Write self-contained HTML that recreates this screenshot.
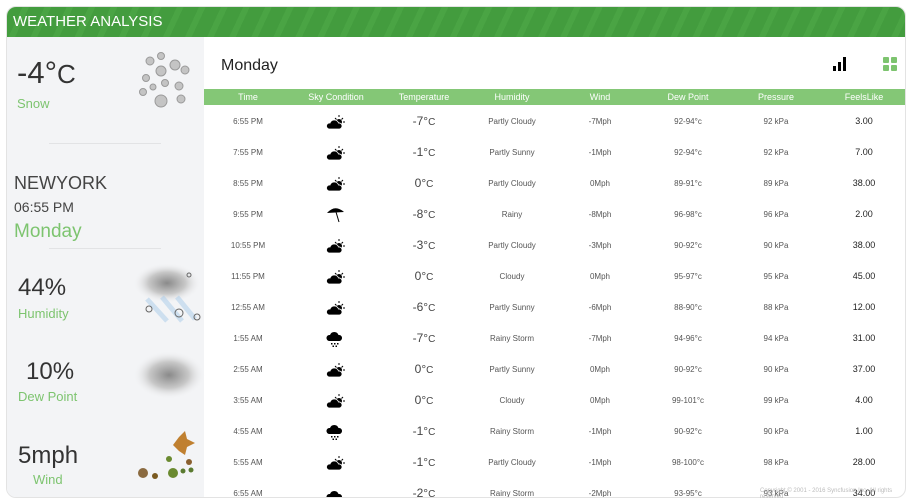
<!DOCTYPE html>
<html><head><meta charset="utf-8"><style>
*{margin:0;padding:0;box-sizing:border-box}
body{width:912px;height:504px;overflow:hidden;background:#fff;font-family:"Liberation Sans",sans-serif;position:relative}
.frame{position:absolute;left:6px;top:6px;width:900px;height:492px;border:1px solid #e3e3e3;border-radius:10px;overflow:hidden}
.hdr{position:absolute;left:0;top:0;width:900px;height:30px;background:repeating-linear-gradient(115deg,#439c3e 0 14px,#4aa444 14px 20px);color:#fff;font-size:15px;line-height:30px;padding-left:6px}
.left{position:absolute;left:0;top:30px;width:197px;height:462px;background:#f3f4f6;border-bottom-left-radius:10px}
.t{position:absolute;color:#333;line-height:1}
.g{position:absolute;color:#7dc46f;line-height:1}
.hr{position:absolute;left:42px;width:112px;height:1px;background:#e2e3e5}
.th{position:absolute;left:197px;top:82px;width:703px;height:16px;background:#84c776;color:#fff;font-size:9px;line-height:16px}
.c{position:absolute;width:88px;text-align:center}
.row{position:absolute;left:197px;width:703px;height:31px;font-size:8px;color:#555;line-height:31px}
.row .tp{font-size:12px;color:#444}
.row .fl{font-size:9px;color:#222}
.row svg{vertical-align:middle}
</style></head><body>
<div class="frame">
<div class="hdr">WEATHER ANALYSIS</div>
<div class="left">
<div class="t" style="left:10px;top:20px;font-size:31px">-4°<span style="font-size:26px">C</span></div>
<div class="g" style="left:10px;top:60px;font-size:13px">Snow</div>
<svg style="position:absolute;left:126px;top:14px" width="60" height="64">
<g fill="#c4c4c4" stroke="#9a9a9a" stroke-width="1">
<circle cx="17" cy="10" r="4"/><circle cx="28" cy="5" r="3.5"/><circle cx="42" cy="14" r="5"/><circle cx="52" cy="19" r="4"/><circle cx="28" cy="20" r="5"/><circle cx="13" cy="27" r="3.5"/><circle cx="32" cy="32" r="3.5"/><circle cx="46" cy="35" r="4"/><circle cx="10" cy="41" r="3.5"/><circle cx="28" cy="50" r="6"/><circle cx="48" cy="48" r="4"/><circle cx="20" cy="36" r="3"/>
</g></svg>
<div class="hr" style="top:106px"></div>
<div class="t" style="left:7px;top:137px;font-size:18px;color:#444">NEWYORK</div>
<div class="t" style="left:7px;top:163px;font-size:14px;color:#444">06:55 PM</div>
<div class="g" style="left:7px;top:185px;font-size:19px">Monday</div>
<div class="hr" style="top:211px"></div>
<svg style="position:absolute;left:120px;top:222px" width="80" height="70">
<defs><radialGradient id="cl"><stop offset="0" stop-color="#8a8a8a"/><stop offset=".55" stop-color="#c8c8c8"/><stop offset="1" stop-color="#f3f4f6" stop-opacity="0"/></radialGradient></defs>
<ellipse cx="40" cy="24" rx="34" ry="20" fill="url(#cl)"/>
<path d="M20 40 L40 62 M35 38 L55 62 M50 38 L68 60" stroke="#a8cbea" stroke-width="5" opacity=".5"/>
<g fill="none" stroke="#666"><circle cx="22" cy="50" r="3"/><circle cx="52" cy="54" r="4"/><circle cx="70" cy="58" r="3"/><circle cx="62" cy="16" r="2"/></g>
</svg>
<div class="t" style="left:11px;top:239px;font-size:24px">44%</div>
<div class="g" style="left:11px;top:270px;font-size:13px">Humidity</div>
<svg style="position:absolute;left:120px;top:306px" width="80" height="60">
<ellipse cx="42" cy="32" rx="36" ry="24" fill="url(#cl)"/></svg>
<div class="t" style="left:19px;top:323px;font-size:24px">10%</div>
<div class="g" style="left:11px;top:353px;font-size:13px">Dew Point</div>
<svg style="position:absolute;left:126px;top:392px" width="70" height="60">
<path d="M46 8 L52 2 L54 10 L62 14 L54 18 L52 26 L46 22 L40 16 Z" fill="#c08030"/>
<circle cx="36" cy="30" r="3" fill="#6a8a30"/><circle cx="56" cy="33" r="3" fill="#8a6030"/><circle cx="40" cy="44" r="5" fill="#6a8a30"/><circle cx="10" cy="44" r="5" fill="#8a6a40"/><circle cx="50" cy="42" r="2.5" fill="#5a7a30"/><circle cx="58" cy="41" r="2.5" fill="#5a7a30"/><circle cx="22" cy="47" r="3" fill="#7a5a20"/>
</svg>
<div class="t" style="left:11px;top:407px;font-size:24px">5mph</div>
<div class="g" style="left:26px;top:436px;font-size:13px">Wind</div>
</div>
<div style="position:absolute;left:214px;top:50px;font-size:16px;color:#222">Monday</div>
<svg style="position:absolute;left:825px;top:49px" width="16" height="16"><rect x="1" y="10" width="3" height="5"/><rect x="6" y="6" width="3" height="9"/><rect x="11" y="1" width="3" height="14"/></svg>
<svg style="position:absolute;left:875px;top:49px" width="16" height="16" fill="#7dc46f"><rect x="1" y="1" width="6" height="6" rx="1"/><rect x="9" y="1" width="6" height="6" rx="1"/><rect x="1" y="9" width="6" height="6" rx="1"/><rect x="9" y="9" width="6" height="6" rx="1"/></svg>
<div class="th">
<div class="c" style="left:0">Time</div><div class="c" style="left:88px">Sky Condition</div><div class="c" style="left:176px">Temperature</div><div class="c" style="left:264px">Humidity</div><div class="c" style="left:352px">Wind</div><div class="c" style="left:440px">Dew Point</div><div class="c" style="left:528px">Pressure</div><div class="c" style="left:616px">FeelsLike</div>
</div>
<svg width="0" height="0" style="position:absolute"><defs>
<symbol id="ps" viewBox="0 0 20 16"><g stroke="#000" stroke-width="1"><path d="M13 1v2M17 4l-1.5 1.5M19 8h-2M9 4l1.5 1.5"/></g><circle cx="13" cy="8" r="3" fill="#000"/><path d="M3 15 a3 3 0 0 1 1-6 a4.5 4.5 0 0 1 8.5 0 a3 3 0 0 1 1 6 Z" fill="#000" stroke="#fff" stroke-width=".8"/></symbol>
<symbol id="um" viewBox="0 0 20 16"><path d="M1 6 Q9 -3 18 5 Z" fill="#000"/><path d="M10 5 L13 15" stroke="#000" stroke-width="1"/></symbol>
<symbol id="rn" viewBox="0 0 20 16"><path d="M3 10 a3 3 0 0 1 1-6 a4.5 4.5 0 0 1 8.5 0 a3 3 0 0 1 1 6 Z" fill="#000"/><g fill="#000"><rect x="5" y="12" width="1.5" height="1.5"/><rect x="8" y="12" width="1.5" height="1.5"/><rect x="11" y="12" width="1.5" height="1.5"/><rect x="6.5" y="14.5" width="1.5" height="1.5"/><rect x="9.5" y="14.5" width="1.5" height="1.5"/></g></symbol>
<symbol id="cd" viewBox="0 0 20 16"><path d="M3 14 a3 3 0 0 1 1-6 a4.5 4.5 0 0 1 8.5 0 a3 3 0 0 1 1 6 Z" fill="#000"/></symbol>
</defs></svg>
<div id="rows"></div>
</div>
<div style="position:absolute;left:760px;top:488px;font-size:6px;color:#bbb">Copyright © 2001 - 2016 Syncfusion Inc. All rights reserved</div>
<script>
var d=[["6:55 PM","ps","-7","Partly Cloudy","-7Mph","92-94","92","3.00"],["7:55 PM","ps","-1","Partly Sunny","-1Mph","92-94","92","7.00"],["8:55 PM","ps","0","Partly Cloudy","0Mph","89-91","89","38.00"],["9:55 PM","um","-8","Rainy","-8Mph","96-98","96","2.00"],["10:55 PM","ps","-3","Partly Cloudy","-3Mph","90-92","90","38.00"],["11:55 PM","ps","0","Cloudy","0Mph","95-97","95","45.00"],["12:55 AM","ps","-6","Partly Sunny","-6Mph","88-90","88","12.00"],["1:55 AM","rn","-7","Rainy Storm","-7Mph","94-96","94","31.00"],["2:55 AM","ps","0","Partly Sunny","0Mph","90-92","90","37.00"],["3:55 AM","ps","0","Cloudy","0Mph","99-101","99","4.00"],["4:55 AM","rn","-1","Rainy Storm","-1Mph","90-92","90","1.00"],["5:55 AM","ps","-1","Partly Cloudy","-1Mph","98-100","98","28.00"],["6:55 AM","cd","-2","Rainy Storm","-2Mph","93-95","93","34.00"]];
var h="";d.forEach(function(r,i){h+='<div class="row" style="top:'+(99+i*31)+'px"><div class="c" style="left:0">'+r[0]+'</div><div class="c" style="left:88px"><svg width="20" height="16"><use href="#'+r[1]+'"/></svg></div><div class="c tp" style="left:176px">'+r[2]+'°<span style="font-size:10px">C</span></div><div class="c" style="left:264px">'+r[3]+'</div><div class="c" style="left:352px">'+r[4]+'</div><div class="c" style="left:440px">'+r[5]+'°c</div><div class="c" style="left:528px">'+r[6]+' kPa</div><div class="c fl" style="left:616px">'+r[7]+'</div></div>'});
document.getElementById("rows").innerHTML=h;
</script>
</body></html>
